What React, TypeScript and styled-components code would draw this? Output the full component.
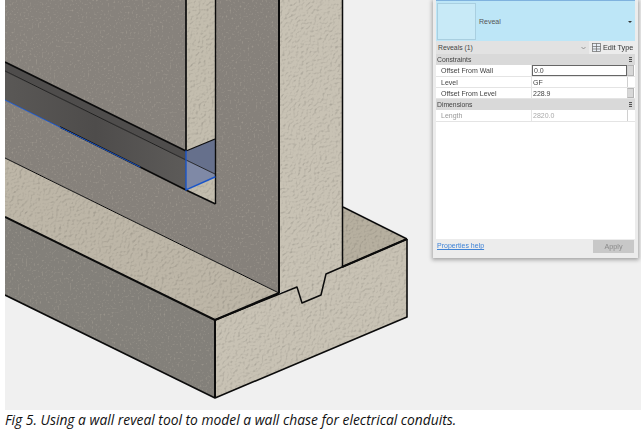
import React from "react";
import styled, { createGlobalStyle } from "styled-components";

const Global = createGlobalStyle`
  html, body { margin: 0; padding: 0; background: #fff; }
  body { width: 641px; height: 433px; overflow: hidden; }
`;

const Page = styled.div`
  padding-left: 5px;
  width: 636px;
`;

const Figure = styled.div`
  position: relative;
  height: 410px;
  background: #f0f0f0;
`;

const Drawing = styled.svg`
  display: block;
  width: 636px;
  height: 410px;
`;

const Caption = styled.div`
  font-family: "Open Sans", sans-serif;
  font-style: italic;
  font-size: 13.83px;
  line-height: 20px;
  color: #111;
  white-space: nowrap;
`;

const Panel = styled.div`
  position: absolute;
  left: 428px;
  top: 0;
  width: 205px;
  height: 258px;
  box-sizing: border-box;
  padding: 0 3px;
  background: #ececec;
  box-shadow: 0 1px 4px 1px rgba(0, 0, 0, 0.32);
  display: flex;
  flex-direction: column;
  font-family: "Liberation Sans", sans-serif;
  font-size: 7px;
  color: #444;
  filter: blur(0.35px);
`;

const Header = styled.div`
  height: 41px;
  flex: none;
  background: #bde6f7;
  border-top: 1px solid #7fb2de;
  box-sizing: border-box;
  display: flex;
  align-items: center;
  padding: 1px 3px 0 1px;
  gap: 3px;
`;

const Thumb = styled.div`
  width: 39px;
  height: 37px;
  background: #c8eaf7;
  border: 1px solid #a9cfe0;
  box-sizing: border-box;
`;

const HeaderName = styled.span`
  flex: 1;
  color: #555;
`;

const Caret = styled.span`
  width: 0;
  height: 0;
  border-left: 2px solid transparent;
  border-right: 2px solid transparent;
  border-top: 2px solid #333;
`;

const Selector = styled.div`
  height: 13px;
  flex: none;
  display: flex;
  align-items: center;
`;

const SelectorField = styled.div`
  width: 153px;
  height: 13px;
  background: #e2e2e2;
  display: flex;
  align-items: center;
  justify-content: space-between;
  padding: 0 3px 0 2px;
  box-sizing: border-box;
  font-size: 6.8px;
`;

const EditType = styled.div`
  flex: 1;
  display: flex;
  align-items: center;
  gap: 2px;
  padding-left: 3px;
  font-size: 7.3px;
  color: #333;
  white-space: nowrap;
`;

const Group = styled.div`
  height: 11px;
  flex: none;
  background: #d9d9d9;
  display: flex;
  align-items: center;
  justify-content: space-between;
  padding: 0 3px 0 1px;
  font-size: 6.8px;
  color: #444;
`;

const Grip = styled.span`
  width: 3px;
  height: 5px;
  background: repeating-linear-gradient(#555 0 1px, #ccc 1px 2px);
`;

const Rows = styled.div`
  display: flex;
  flex-direction: column;
  flex: none;
`;

const Row = styled.div<{ $h: number }>`
  height: ${(p) => p.$h}px;
  display: grid;
  grid-template-columns: 96px 95px 7px;
  background: #fff;
  box-sizing: border-box;
  border-bottom: 1px solid #e4e4e4;
`;

const Label = styled.div<{ $muted?: boolean }>`
  display: flex;
  align-items: center;
  padding-left: 5px;
  border-right: 1px solid #e4e4e4;
  color: ${(p) => (p.$muted ? "#999" : "#444")};
`;

const Value = styled.div<{ $active?: boolean; $muted?: boolean }>`
  display: flex;
  align-items: center;
  padding-left: 1px;
  box-sizing: border-box;
  color: ${(p) => (p.$muted ? "#aaa" : "#444")};
  border: ${(p) => (p.$active ? "1px solid #666" : "none")};
`;

const Slot = styled.div<{ $filled?: boolean }>`
  background: ${(p) => (p.$filled ? "#d8d8d8" : "#fff")};
  border: ${(p) => (p.$filled ? "1px solid #b5b5b5" : "none")};
  border-left: 1px solid #d0d0d0;
  box-sizing: border-box;
`;

const Blank = styled.div`
  flex: 1;
  background: #fff;
`;

const Footer = styled.div`
  height: 18px;
  flex: none;
  display: flex;
  align-items: flex-start;
  justify-content: space-between;
  padding: 1px 1px 0 1px;
`;

const Help = styled.a`
  color: #3f83d6;
  text-decoration: underline;
  font-size: 7px;
  line-height: 12px;
`;

const Apply = styled.div`
  width: 41px;
  height: 13px;
  background: #c8c8c8;
  color: #8a8a8a;
  display: flex;
  align-items: center;
  justify-content: center;
  font-size: 7.2px;
`;

const Concrete = ({ d, fill, dark }: { d: string; fill: string; dark?: boolean }) => (
  <polygon points={d} fill={fill} filter={dark ? "url(#speck)" : "url(#stucco)"} />
);

const Illustration = () => (
  <Drawing viewBox="5 0 636 410" aria-hidden="true">
    <defs>
      <filter id="stucco" x="0" y="0" width="100%" height="100%" colorInterpolationFilters="sRGB">
        <feTurbulence type="fractalNoise" baseFrequency="0.38" numOctaves="3" seed="4" result="n" />
        <feDiffuseLighting in="n" surfaceScale="0.5" diffuseConstant="1.13" lightingColor="#fff" result="l">
          <feDistantLight azimuth="225" elevation="62" />
        </feDiffuseLighting>
        <feBlend in="SourceGraphic" in2="l" mode="multiply" result="b" />
        <feComposite in="b" in2="SourceAlpha" operator="in" />
      </filter>
      <filter id="speck" x="0" y="0" width="100%" height="100%" colorInterpolationFilters="sRGB">
        <feTurbulence type="fractalNoise" baseFrequency="0.5" numOctaves="2" seed="9" result="n" />
        <feColorMatrix
          in="n"
          type="matrix"
          values="0 0 0 0 0.72  0 0 0 0 0.69  0 0 0 0 0.64  1.6 0 0 0 -0.92"
          result="s"
        />
        <feMerge result="m">
          <feMergeNode in="SourceGraphic" />
          <feMergeNode in="s" />
        </feMerge>
        <feComposite in="m" in2="SourceAlpha" operator="in" />
      </filter>
      <linearGradient id="groove" x1="0" y1="0" x2="1" y2="0">
        <stop offset="0" stopColor="#5a5856" />
        <stop offset="0.5" stopColor="#4e4c4b" />
        <stop offset="1" stopColor="#5d5b59" />
      </linearGradient>
    </defs>

    {/* dark wall faces */}
    <Concrete dark d="5,0 186,0 186,151 5,62" fill="#87827c" />
    <Concrete dark d="5,100 186,190 215,204 215,0 279,0 279,293 5,158" fill="#86817b" />
    {/* groove */}
    <polygon points="5,62 186,151 186,160 5,71" fill="#4f4d4c" />
    <polygon points="5,71 186,160 186,190 5,100" fill="url(#groove)" />
    {/* niche */}
    <Concrete d="186,0 215,0 215,139 186,151" fill="#c3bdae" />
    <Concrete d="186,190 215,177 215,204" fill="#c3bdae" />
    <polygon points="186,151 215,139 215,174 186,160" fill="#66708c" />
    <polygon points="186,160 215,174 215,177 186,190" fill="#7f89a6" />
    {/* foundation */}
    <Concrete d="5,158 279,293 215,320 5,217" fill="#bdb6a7" />
    <Concrete dark d="5,217 215,320 215,398 5,295" fill="#83807a" />
    <Concrete d="342,207 407,239 342,267" fill="#b6af9f" />
    <Concrete d="279,0 342,0 342,267 326,274 321,295 302,303 297,287 279,293" fill="#c8c2b4" />
    <Concrete d="215,320 297,287 302,303 321,295 326,274 407,239 407,317 215,398" fill="#c8c2b4" />

    {/* outlines */}
    <g fill="none" stroke="#0b0b0b" strokeLinejoin="round">
      <path d="M186 0V151M5 62L186 151" strokeWidth="1.7" />
      <path d="M215.5 0V204" strokeWidth="1.4" />
      <path d="M279 0V293" strokeWidth="2" />
      <path d="M342.5 0V267" strokeWidth="1.5" />
      <path d="M5 71L186 160L215 174" strokeWidth="0.8" />
      <path d="M60 127L186 190L215.5 204" strokeWidth="1.7" />
      <path d="M186 151L215 139" strokeWidth="1.3" />
      <path d="M5 158L279 293" strokeWidth="1" />
      <path d="M5 217L215 320" strokeWidth="2" />
      <path d="M215 320V398" strokeWidth="2" />
      <path d="M5 295L215 398L407 317V239" strokeWidth="1.6" />
      <path d="M215 320L297 287L302 303L321 295L326 274L407 239" strokeWidth="1.5" />
      <path d="M215 320L279 293M342 267L407 239" strokeWidth="2.2" />
      <path d="M343 207L407 239" strokeWidth="1.5" />
    </g>
    <g fill="none" stroke="#1a55c8" strokeLinecap="round">
      <path d="M5 100L140 167" strokeWidth="1" />
      <path d="M186 151V190L215 177" strokeWidth="1.4" />
    </g>
  </Drawing>
);

const EditIcon = () => (
  <svg width="9" height="9" viewBox="0 0 9 9" aria-hidden="true">
    <rect x="0.5" y="0.5" width="8" height="8" fill="#e8eef5" stroke="#666" strokeWidth="0.7" />
    <path d="M0.5 3.5H8.5M0.5 6H8.5M4.5 0.5V8.5" stroke="#666" strokeWidth="0.7" />
  </svg>
);

const Chevron = () => (
  <svg width="5" height="4" viewBox="0 0 5 4" aria-hidden="true">
    <path d="M0.5 1L2.5 3L4.5 1" fill="none" stroke="#777" strokeWidth="0.7" />
  </svg>
);

export default function App() {
  return (
    <>
      <Global />
      <Page>
        <Figure>
          <Illustration />
          <Panel>
            <Header>
              <Thumb />
              <HeaderName>Reveal</HeaderName>
              <Caret />
            </Header>
            <Selector>
              <SelectorField>
                <span>Reveals (1)</span>
                <Chevron />
              </SelectorField>
              <EditType>
                <EditIcon />
                Edit Type
              </EditType>
            </Selector>
            <Group>
              Constraints
              <Grip />
            </Group>
            <Rows>
              <Row $h={12}>
                <Label>Offset From Wall</Label>
                <Value $active>0.0</Value>
                <Slot $filled />
              </Row>
              <Row $h={11}>
                <Label>Level</Label>
                <Value>GF</Value>
                <Slot />
              </Row>
              <Row $h={11}>
                <Label>Offset From Level</Label>
                <Value>228.9</Value>
                <Slot $filled />
              </Row>
            </Rows>
            <Group>
              Dimensions
              <Grip />
            </Group>
            <Rows>
              <Row $h={12}>
                <Label $muted>Length</Label>
                <Value $muted>2820.0</Value>
                <Slot />
              </Row>
            </Rows>
            <Blank />
            <Footer>
              <Help>Properties help</Help>
              <Apply>Apply</Apply>
            </Footer>
          </Panel>
        </Figure>
        <Caption>Fig 5. Using a wall reveal tool to model a wall chase for electrical conduits.</Caption>
      </Page>
    </>
  );
}
